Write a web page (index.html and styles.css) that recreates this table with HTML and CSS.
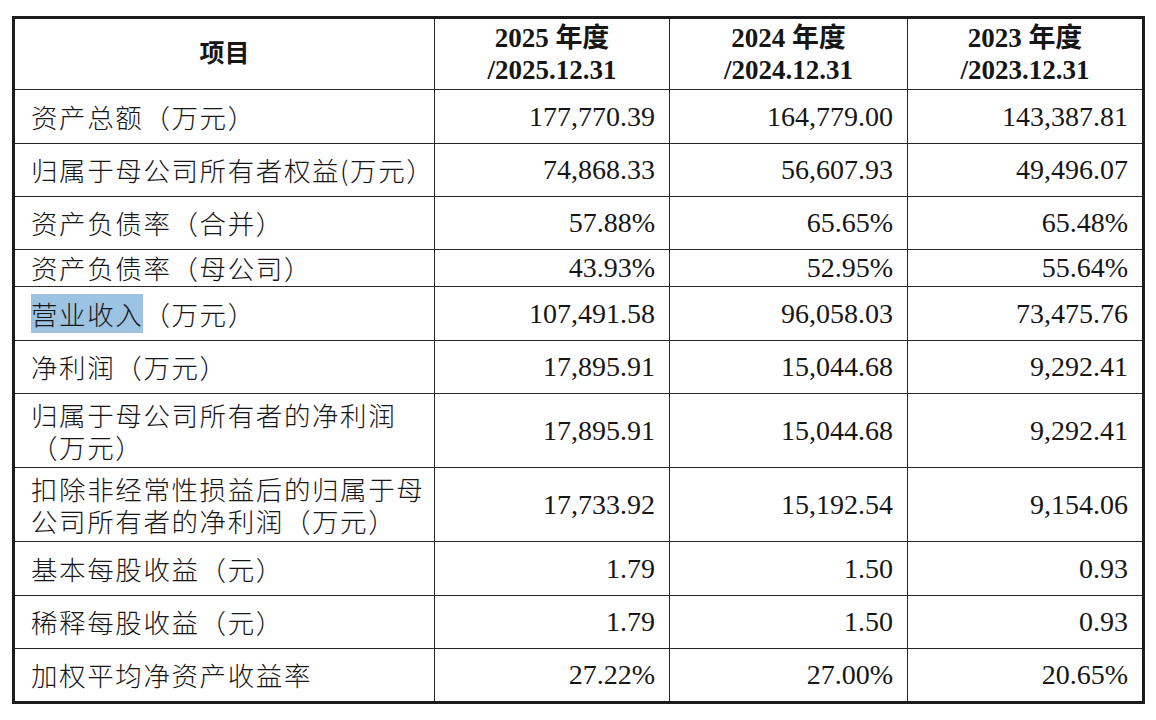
FILE: index.html
```html
<!DOCTYPE html>
<html lang="zh-CN">
<head>
<meta charset="utf-8">
<title>主要财务指标</title>
<link rel="stylesheet" href="styles.css">
</head>
<body>
<table class="fin">
  <colgroup>
    <col class="c-item">
    <col class="c-y1">
    <col class="c-y2">
    <col class="c-y3">
  </colgroup>
  <thead>
    <tr class="r-head">
      <th class="h-item">项目</th>
      <th>2025 年度<br>/2025.12.31</th>
      <th>2024 年度<br>/2024.12.31</th>
      <th>2023 年度<br>/2023.12.31</th>
    </tr>
  </thead>
  <tbody>
    <tr class="r54"><td class="lbl">资产总额（万元）</td><td>177,770.39</td><td>164,779.00</td><td>143,387.81</td></tr>
    <tr class="r53"><td class="lbl">归属于母公司所有者权益(万元）</td><td>74,868.33</td><td>56,607.93</td><td>49,496.07</td></tr>
    <tr class="r53"><td class="lbl">资产负债率（合并）</td><td>57.88%</td><td>65.65%</td><td>65.48%</td></tr>
    <tr class="r38"><td class="lbl">资产负债率（母公司）</td><td>43.93%</td><td>52.95%</td><td>55.64%</td></tr>
    <tr class="r54"><td class="lbl"><span class="sel">营业收入</span>（万元）</td><td>107,491.58</td><td>96,058.03</td><td>73,475.76</td></tr>
    <tr class="r53"><td class="lbl">净利润（万元）</td><td>17,895.91</td><td>15,044.68</td><td>9,292.41</td></tr>
    <tr class="r74"><td class="lbl"><div class="ln">归属于母公司所有者的净利润</div><div class="ln">（万元）</div></td><td>17,895.91</td><td>15,044.68</td><td>9,292.41</td></tr>
    <tr class="r74"><td class="lbl"><div class="ln">扣除非经常性损益后的归属于母</div><div class="ln">公司所有者的净利润（万元）</div></td><td>17,733.92</td><td>15,192.54</td><td>9,154.06</td></tr>
    <tr class="r54"><td class="lbl">基本每股收益（元）</td><td>1.79</td><td>1.50</td><td>0.93</td></tr>
    <tr class="r53"><td class="lbl">稀释每股收益（元）</td><td>1.79</td><td>1.50</td><td>0.93</td></tr>
    <tr class="r54"><td class="lbl">加权平均净资产收益率</td><td>27.22%</td><td>27.00%</td><td>20.65%</td></tr>
  </tbody>
</table>
</body>
</html>
```

FILE: styles.css
```css
html, body {
  margin: 0;
  padding: 0;
  background: #ffffff;
}

body {
  padding: 16px 0 0 12px;
}

.fin {
  border-collapse: collapse;
  table-layout: fixed;
  width: 1130px;
  border: 3px solid #1c1c1c;
  color: #161616;
  font-family: "Liberation Serif", "Noto Sans CJK SC", serif;
  font-size: 27px;
  line-height: 32px;
}

.c-item { width: 421px; }
.c-y1 { width: 235px; }
.c-y2 { width: 238px; }
.c-y3 { width: 236px; }

.fin th,
.fin td {
  border: 1.5px solid #262626;
  padding: 0 14px 0 15px;
  vertical-align: middle;
}

.fin th {
  font-weight: bold;
  text-align: center;
  font-size: 27px;
  padding: 0 4px;
}

.fin th.h-item {
  font-family: "Noto Sans CJK SC", sans-serif;
  font-size: 25px;
  padding-bottom: 6px;
}

.fin td {
  text-align: right;
  font-size: 28px;
}

.fin td.lbl {
  text-align: left;
  font-family: "Noto Sans CJK SC", sans-serif;
  font-weight: 300;
  font-size: 26.5px;
  letter-spacing: 1.6px;
  padding-left: 16px;
  white-space: nowrap;
}

.ln {
  height: 32px;
  line-height: 32px;
}

.r-head { height: 72px; }
.r54 { height: 54px; }
.r53 { height: 53px; }
.r38 { height: 37px; }
.r74 { height: 74px; }

.sel {
  background: #9cc3e2;
}
```
